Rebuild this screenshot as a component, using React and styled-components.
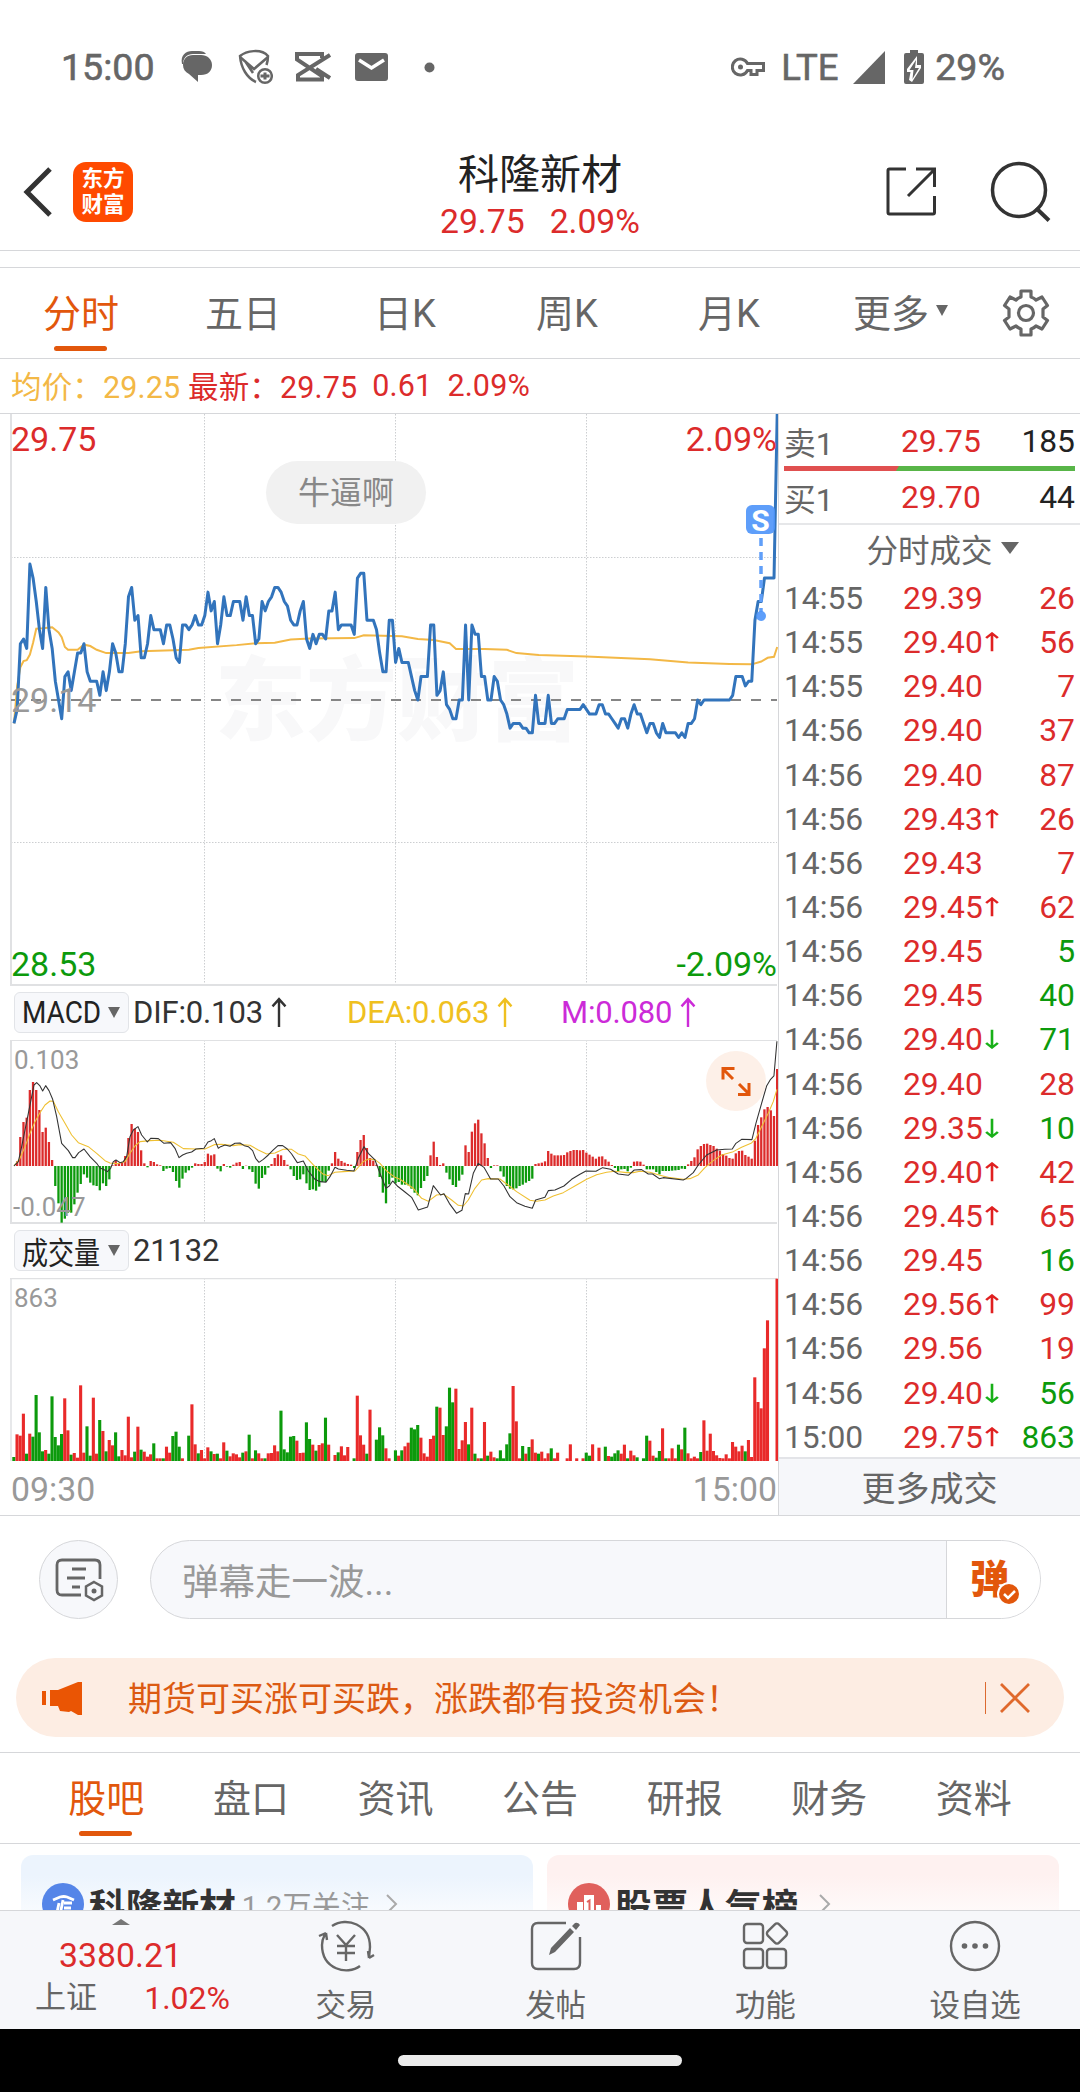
import styled, { createGlobalStyle } from "styled-components";

const GlobalStyle = createGlobalStyle`
  * {
    box-sizing: border-box;
  }
  body {
    margin: 0;
    background: #fff;
    font-family: Roboto, "Noto Sans CJK SC", sans-serif;
  }
`;

const RED = "#dc2b2b";
const GREEN = "#0c9a0c";
const ORANGE = "#e2570c";
const GRAY = "#666";
const LINE = "#d6d7da";

/* ---------- data ---------- */

// one value per minute, in cents above / below the previous close (29.14)
const PRICES = [
  -5, -2, 12, 13, 11, 29, 26, 21, 15, 11, 24, 15, 11, 4, 0, -4, 5, 6, 2, 6, 10,
  10, 12, 6, 4, 4, 4, 1, 6, 2, 6, 12, 10, 6, 6, 12, 22, 24, 17, 18, 9, 9, 12,
  18, 15, 15, 15, 12, 16, 16, 13, 9, 8, 16, 16, 15, 16, 18, 16, 16, 18, 23, 19,
  21, 12, 16, 22, 18, 18, 21, 21, 21, 17, 22, 18, 18, 12, 13, 21, 19, 21, 22,
  24, 24, 23, 21, 20, 17, 16, 16, 19, 21, 13, 11, 14, 12, 14, 14, 13, 19, 19,
  23, 15, 16, 16, 16, 16, 14, 26, 27, 27, 17, 17, 17, 15, 10, 6, 6, 17, 17, 8,
  11, 8, 8, 8, 5, 2, 0, 5, 5, 5, 16, 16, 1, 2, 6, -1, -2, -4, -4, 0, 0, 16, 0,
  16, 14, 14, 5, 5, 0, 0, 5, 4, 0, -1, -3, -6, -5, -5, -5, -6, -6, -7, -7, 1,
  -5, -5, -5, 1, -5, -5, -4, -4, -4, -2, -2, -2, -2, -2, -1, -2, -3, -3, -3,
  -1, -1, -3, -3, -4, -5, -6, -4, -4, -6, -3, -1, -3, -3, -5, -7, -5, -5, -7,
  -8, -5, -7, -7, -7, -7, -8, -7, -8, -5, -5, -4, 0, -1, 0, 0, 0, 0, 0, 0, 0,
  0, 0, 1, 5, 5, 5, 3, 4, 4, 17, 21, 21, 26, 26, 26, 26, 61,
];

// [minute, cents]
const AVERAGE = [
  [0, -5], [1, 3], [2, 7], [3, 8.3], [4, 8.5], [5, 9.7], [6, 12.2], [7, 15.2],
  [9, 15.3], [12, 15.5], [14, 14.4], [15, 13.4], [16, 11.3], [17, 10.7],
  [20, 10.7], [22, 11.8], [24, 11.5], [26, 10.7], [29, 10], [36, 10],
  [40, 10.4], [55, 10.7], [58, 11.1], [70, 11.7], [76, 12.1], [82, 12.2],
  [87, 12.9], [93, 13.1], [107, 13.2], [110, 13.8], [122, 13.6], [127, 13],
  [132, 12.8], [137, 12.1], [139, 10.9], [148, 10.9], [155, 10.7], [158, 10],
  [165, 9.6], [180, 9.3], [200, 8.7], [212, 8], [225, 7.7], [232, 7.6],
  [235, 8.2], [237, 9], [239, 9.2], [240, 11.3],
];

const HISTOGRAM = [
  0, 14, 87, 132, 145, 228, 252, 228, 168, 102, 115, 72, 18, -60, -112, -170,
  -158, -140, -140, -115, -80, -54, -25, -35, -50, -58, -60, -73, -52, -60,
  -40, 2, 17, 8, 10, 30, 84, 126, 112, 102, 47, 8, -4, 15, 12, 5, 2, -15, -8,
  -6, -18, -45, -65, -38, -20, -13, -5, 8, 6, 6, 12, 37, 32, 35, -8, -16, 6,
  -2, -5, 4, 10, 12, -9, 1, -10, -18, -53, -68, -36, -26, -5, 6, 24, 35, 32,
  18, 4, -10, -30, -42, -40, -25, -52, -72, -70, -74, -62, -48, -48, -14, 8,
  42, 22, 15, 10, 6, 4, -6, 42, 78, 93, 54, 24, 16, 4, -33, -80, -112, -55,
  -35, -52, -48, -56, -56, -58, -68, -80, -88, -66, -45, -30, 32, 73, 27, 3, 8,
  -20, -40, -57, -63, -44, -26, 62, 42, 103, 128, 139, 98, 68, 24, -6, 2, 2,
  -16, -32, -60, -68, -70, -67, -60, -56, -50, -45, -38, 6, 8, 10, 14, 45, 37,
  32, 32, 32, 33, 41, 45, 48, 48, 47, 48, 40, 34, 28, 22, 28, 29, 20, 13, 3,
  -6, -15, -10, -9, -16, -5, 13, 14, 13, 4, -10, -10, -10, -18, -25, -15, -15,
  -15, -14, -13, -12, -8, -9, 5, 15, 26, 50, 60, 66, 67, 63, 60, 52, 46, 36,
  31, 24, 22, 38, 45, 46, 33, 28, 22, 76, 123, 146, 170, 177, 167, 150, 291,
];

const DIF =
  "42,558 55,545 65,500 75,450 85,400 95,350 102,315 110,308 120,318 128,333 137,317 147,332 158,358 170,410 185,490 205,512 218,533 225,533 236,518 252,507 270,530 290,550 300,564 310,568 322,575 332,565 340,545 348,540 360,548 370,545 380,530 390,470 400,450 414,440 425,465 442,486 452,475 475,476 492,490 512,488 525,505 537,533 548,525 560,520 575,516 588,507 612,505 624,486 634,482 643,476 655,505 662,500 675,495 690,499 705,490 720,489 733,497 745,500 758,512 767,535 777,547 790,538 805,525 820,510 834,497 848,497 862,507 875,522 892,548 910,543 925,573 945,598 960,605 978,607 990,590 1005,562 1015,567 1040,571 1062,573 1075,535 1092,500 1105,520 1125,540 1140,580 1158,625 1168,618 1178,603 1192,618 1215,636 1235,652 1255,690 1283,681 1300,617 1322,645 1332,641 1348,670 1370,700 1386,691 1396,641 1406,642 1420,580 1435,550 1452,562 1472,597 1495,597 1512,618 1530,650 1550,668 1575,679 1597,685 1607,660 1635,652 1645,632 1665,630 1692,618 1715,598 1740,583 1758,573 1788,574 1808,563 1832,568 1855,582 1885,586 1903,570 1925,569 1945,582 1958,582 1978,596 1990,593 2050,600 2058,596 2080,578 2095,555 2120,525 2150,510 2175,508 2197,507 2208,490 2225,478 2256,479 2268,430 2285,370 2300,318 2312,298 2322,288 2331,184";

const DEA =
  "42,558 60,535 75,500 90,460 105,425 120,398 135,375 150,363 160,364 175,395 195,430 215,465 235,488 265,500 290,520 315,542 330,549 350,551 375,545 390,520 405,498 420,485 450,482 480,481 500,484 520,487 550,506 590,507 615,507 643,494 665,493 700,497 720,494 750,496 775,510 800,522 825,519 850,508 875,508 895,522 915,528 945,560 970,583 985,587 1005,577 1030,575 1065,573 1090,545 1105,537 1125,539 1140,550 1160,573 1185,592 1200,598 1240,625 1265,655 1285,664 1310,645 1332,643 1355,660 1375,676 1390,678 1405,660 1425,625 1445,600 1465,596 1500,597 1520,612 1550,635 1590,661 1610,664 1635,660 1660,648 1690,638 1730,615 1760,598 1790,584 1820,577 1845,574 1880,578 1900,578 1920,574 1950,577 1980,586 2010,593 2050,598 2070,596 2095,585 2115,563 2140,542 2165,525 2200,515 2225,502 2255,489 2268,475 2285,440 2305,400 2320,365 2331,328";

// positive: rising minute, negative: falling minute
const VOLUMES = [
  -12, 80, 76, 142, -22, 82, -73, -198, -86, -29, 33, -22, -194, -72, -47, -81,
  188, 92, -19, 24, 10, 227, 25, -104, -16, 190, 22, -123, 90, -29, 63, 47,
  -86, -14, 33, 17, 133, 11, -28, 103, -34, 28, 13, 20, -53, 8, 8, -8, 43, 25,
  -75, -88, -43, 8, 0, -76, 170, 50, -23, 33, 8, 41, -29, 21, -22, 8, 56, -31,
  14, 23, 20, 11, -25, 29, -79, 8, -32, 23, 8, -8, 23, 24, 47, 29, -151, -35,
  -26, -73, -75, 61, 24, 25, -116, -66, 49, -31, 48, 53, -130, 49, 0, 18, -26,
  44, 17, 42, 0, -8, 196, 77, 49, -22, 154, 0, -64, -101, -77, 38, 8, 0, -32,
  16, -32, 44, 55, -100, -95, -108, 70, 23, 13, 66, 76, -163, 160, 78, -104,
  -220, -176, 217, 36, 62, 117, -50, 160, -22, 8, -8, 117, -16, 28, 11, -8,
  -32, -8, -50, -83, 225, 119, 8, -45, 22, -42, 65, 25, -22, 28, 8, 23, -38, 8,
  25, 0, 0, 8, 50, 0, 8, 0, 8, -25, -16, 50, 0, 40, 0, -43, 15, -13, -23, -32,
  22, 49, -8, 31, 17, -11, 0, -8, -76, 61, 16, -10, -30, 98, -8, 8, 38, 8, -49,
  35, -100, 23, 8, 13, 8, -27, 122, 31, 82, 30, 17, 9, 8, 20, 8, 57, 43, 29,
  46, -29, 63, 12, 251, 177, 158, 338, 422, 0, 0, 547,
];

const TRADES = [
  { time: "14:55", price: "29.39", qty: 26 },
  { time: "14:55", price: "29.40", dir: "up", qty: 56 },
  { time: "14:55", price: "29.40", qty: 7 },
  { time: "14:56", price: "29.40", qty: 37 },
  { time: "14:56", price: "29.40", qty: 87 },
  { time: "14:56", price: "29.43", dir: "up", qty: 26 },
  { time: "14:56", price: "29.43", qty: 7 },
  { time: "14:56", price: "29.45", dir: "up", qty: 62 },
  { time: "14:56", price: "29.45", qty: 5, sell: true },
  { time: "14:56", price: "29.45", qty: 40, sell: true },
  { time: "14:56", price: "29.40", dir: "down", qty: 71, sell: true },
  { time: "14:56", price: "29.40", qty: 28 },
  { time: "14:56", price: "29.35", dir: "down", qty: 10, sell: true },
  { time: "14:56", price: "29.40", dir: "up", qty: 42 },
  { time: "14:56", price: "29.45", dir: "up", qty: 65 },
  { time: "14:56", price: "29.45", qty: 16, sell: true },
  { time: "14:56", price: "29.56", dir: "up", qty: 99 },
  { time: "14:56", price: "29.56", qty: 19 },
  { time: "14:56", price: "29.40", dir: "down", qty: 56, sell: true },
  { time: "15:00", price: "29.75", dir: "up", qty: 863, sell: true },
];

const xAt = (minute) => 4 + minute * 3.18;

/* ---------- page ---------- */

const Page = styled.div`
  width: 1080px;
  height: 2092px;
  display: flex;
  flex-direction: column;
  overflow: hidden;
  background: #fff;
  color: ${GRAY};
`;

const Content = styled.main`
  height: 1910px;
  flex: none;
  overflow: hidden;
`;

/* ---------- status bar ---------- */

const StatusBar = styled.div`
  display: flex;
  align-items: center;
  height: 134px;
  padding: 0 75px 0 61px;
  font-size: 37.6px;
  font-weight: 400;
  -webkit-text-stroke: 0.6px ${GRAY};
`;

const StatusIcons = styled.div`
  display: flex;
  align-items: center;
  margin-left: ${(p) => p.$left || 0}px;

  svg {
    display: block;
  }
`;

const StatusRight = styled.div`
  display: flex;
  align-items: center;
  margin-left: auto;
`;

const Lte = styled.span`
  margin: 0 12px 0 16px;
  width: 60px;
  font-size: 36.5px;
`;

const Percent = styled.span`
  margin-left: 11px;
`;

/* ---------- header ---------- */

const Header = styled.header`
  display: grid;
  grid-template-columns: 300px 1fr 300px;
  height: 117px;
  border-bottom: 1px solid ${LINE};
`;

const HeaderLeft = styled.div`
  display: flex;
  align-items: center;
  padding: 0 0 0 22px;
  gap: 20px;
`;

const AppLogo = styled.div`
  display: flex;
  flex-direction: column;
  justify-content: center;
  align-items: center;
  width: 60px;
  height: 60px;
  border-radius: 13px;
  background: #ff4a00;
  color: #fff;
  font-size: 21.5px;
  font-weight: 700;
  line-height: 26px;
`;

const HeaderTitle = styled.div`
  display: flex;
  flex-direction: column;
  align-items: center;
`;

const StockName = styled.h1`
  margin: 16px 0 0;
  font-size: 41px;
  font-weight: 400;
  line-height: 50px;
  color: #222;
`;

const StockQuote = styled.div`
  display: flex;
  gap: 25px;
  font-size: 33.7px;
  line-height: 44px;
  color: ${RED};
`;

const HeaderRight = styled.div`
  display: flex;
  align-items: center;
  justify-content: flex-end;
  padding: 0 29px 1px 0;
  gap: 53px;
`;

/* ---------- period tabs ---------- */

const PeriodTabs = styled.nav`
  display: flex;
  height: 92px;
  margin-top: 16px;
  border-top: 1px solid ${LINE};
  border-bottom: 1px solid ${LINE};
`;

const Tab = styled.div`
  position: relative;
  display: flex;
  justify-content: center;
  align-items: center;
  width: ${(p) => p.$width}px;
  padding-bottom: 6px;
  font-size: 38px;
  color: ${(p) => (p.$active ? ORANGE : GRAY)};

  &::after {
    content: "";
    display: ${(p) => (p.$active ? "block" : "none")};
    position: absolute;
    left: 50%;
    bottom: 7px;
    width: 53px;
    height: 5px;
    margin-left: -27px;
    border-radius: 3px;
    background: ${ORANGE};
  }
`;

const Triangle = styled.i`
  width: 0;
  height: 0;
  margin-left: ${(p) => p.$gap || 0}px;
  border-left: ${(p) => p.$w / 2}px solid transparent;
  border-right: ${(p) => p.$w / 2}px solid transparent;
  border-top: ${(p) => p.$h}px solid ${GRAY};
`;

const SettingsSlot = styled.div`
  display: flex;
  align-items: center;
  margin-left: auto;
  padding-right: 30px;
`;

const Summary = styled.div`
  display: flex;
  align-items: center;
  height: 55px;
  padding: 0 0 2px 11px;
  border-bottom: 1px solid ${LINE};
  font-size: 30.5px;
  letter-spacing: 0.15px;
  color: ${RED};
  white-space: pre;
`;

const AveragePrice = styled.span`
  width: 177px;
  color: #f3b846;
`;

const SummaryItem = styled.span`
  margin-right: 15px;
`;

/* ---------- charts ---------- */

const Board = styled.section`
  display: flex;
  height: 1102px;
  border-bottom: 1px solid ${LINE};
`;

const Charts = styled.div`
  width: 779px;
  padding-left: 10px;
  border-right: 1px solid ${LINE};

  svg {
    display: block;
  }
`;

const IndicatorBar = styled.div`
  display: flex;
  align-items: center;
  height: 54px;
  padding: 0 0 1px 4px;
  font-size: 31px;
  color: #333;
`;

const IndicatorPicker = styled.button`
  display: flex;
  align-items: center;
  justify-content: space-between;
  flex: none;
  width: 115px;
  height: 41px;
  padding: 0 8px 1px 7px;
  border: 1px solid #e2e4e8;
  border-radius: 6px;
  background: #f7f8fb;
  color: #222;
  font: inherit;
`;

const PickerLabel = styled.span`
  width: 77px;
  white-space: nowrap;
  text-align: left;
  transform: scaleX(${(p) => p.$squeeze});
  transform-origin: left;
`;

const Reading = styled.span`
  display: flex;
  align-items: center;
  gap: 6px;
  width: ${(p) => p.$width}px;
  padding-left: 4px;
  color: ${(p) => p.$color};
  letter-spacing: -0.15px;
`;

const TimeAxis = styled.div`
  display: flex;
  justify-content: space-between;
  align-items: center;
  height: 54px;
  padding: 3px 1px 0 1px;
  font-size: 33.8px;
  color: #999;
`;

/* ---------- order book ---------- */

const Book = styled.div`
  flex: 1;
  display: flex;
  flex-direction: column;
`;

const Quote = styled.div`
  display: grid;
  grid-template-columns: 117px 1fr auto;
  align-items: center;
  height: ${(p) => p.$height}px;
  padding: ${(p) => p.$drop || 0}px 5px 0 5px;
  font-size: 31.8px;
`;

const Price = styled.span`
  display: flex;
  align-items: center;
  color: ${RED};
`;

const BookQty = styled.span`
  color: #222;
`;

const Ratio = styled.div`
  height: 5px;
  margin: 0 5px;
  background: linear-gradient(120deg, #e05050 0 99px, #58b548 100px);
`;

const BookTitle = styled.div`
  display: flex;
  justify-content: center;
  align-items: center;
  height: 51px;
  padding: 0 0 3px 26px;
  border-top: 2px solid #e6e7e9;
  font-size: 31.5px;
`;

const TradeRow = styled.div`
  display: grid;
  grid-template-columns: 119px 1fr auto;
  align-items: center;
  height: 44.15px;
  padding: 4px 5px 0;
  font-size: 31.8px;
`;

const TradeQty = styled.span`
  color: ${(p) => (p.$sell ? GREEN : RED)};
`;

const MoreTrades = styled.div`
  display: flex;
  justify-content: center;
  align-items: center;
  flex: 1;
  padding-bottom: 1px;
  border-top: 2px solid #e3e4e8;
  background: #f6f7fa;
  font-size: 34px;
`;

/* ---------- bullet comments ---------- */

const CommentRow = styled.div`
  display: flex;
  gap: 32px;
  padding: 24px 39px 0 39px;
`;

const RoundButton = styled.button`
  display: flex;
  align-items: center;
  justify-content: center;
  width: 79px;
  height: 79px;
  padding: 0;
  border: 1px solid ${LINE};
  border-radius: 50%;
  background: #f7f8fb;
`;

const CommentBox = styled.div`
  flex: 1;
  display: flex;
  height: 79px;
  border: 1px solid ${LINE};
  border-radius: 40px;
  background: #f7f8fb;
  overflow: hidden;
`;

const Placeholder = styled.div`
  display: flex;
  align-items: center;
  flex: 1;
  padding: 0 0 1px 31px;
  font-size: 36.5px;
  color: #999;
`;

const BulletToggle = styled.div`
  position: relative;
  display: flex;
  align-items: center;
  width: 94px;
  padding: 0 0 8px 23px;
  border-left: 1px solid ${LINE};
  background: #fff;
  font-size: 39px;
  font-weight: 900;
  color: ${ORANGE};

  svg {
    position: absolute;
    left: 49px;
    top: 40px;
  }
`;

const Banner = styled.div`
  display: flex;
  align-items: center;
  height: 79px;
  margin: 39px 16px 15px;
  padding: 0 34px 0 26px;
  border-radius: 40px;
  background: #fdede3;
  color: #dc5a12;
  font-size: 34px;
`;

const BannerText = styled.span`
  flex: 1;
  margin: 0 0 3px 46px;
`;

const BannerDivider = styled.i`
  width: 1px;
  height: 32px;
  margin-right: 14px;
  background: #dc6a30;
`;

/* ---------- community ---------- */

const SectionTabs = styled.nav`
  display: flex;
  height: 92px;
  padding-left: 34px;
  border-top: 1px solid ${LINE};
  border-bottom: 1px solid ${LINE};
`;

const Cards = styled.div`
  display: flex;
  gap: 14px;
  padding: 11px 21px 0;
`;

const Card = styled.div`
  display: flex;
  align-items: center;
  flex: 1;
  height: 104px;
  padding: 0 0 7px 21px;
  border-radius: 12px;
  background: linear-gradient(${(p) => p.$tint} 20%, #fff 75%);
`;

const CardTitle = styled.strong`
  margin: 0 6px 0 5px;
  font-size: 36.7px;
  font-weight: 700;
  color: #333;
`;

const Followers = styled.span`
  margin: 0 16px 0 0;
  font-size: 29px;
  letter-spacing: 0.2px;
  color: #999;
`;

/* ---------- bottom bar ---------- */

const BottomBar = styled.nav`
  display: flex;
  flex: none;
  height: 119px;
  border-top: 1px solid ${LINE};
  background: #f6f7fa;
`;

const IndexBlock = styled.div`
  display: flex;
  flex-direction: column;
  align-items: center;
  width: 241px;
  padding-top: 8px;
`;

const UpMark = styled.i`
  width: 0;
  height: 0;
  border-left: 9.5px solid transparent;
  border-right: 9.5px solid transparent;
  border-bottom: 6px solid #777;
`;

const IndexValue = styled.div`
  margin-top: 10px;
  font-size: 33.8px;
  line-height: 42px;
  color: ${RED};
`;

const IndexDetail = styled.div`
  display: flex;
  align-items: center;
  justify-content: space-between;
  width: 195px;
  margin-right: -24px;
  line-height: 42px;
  font-size: 31px;
`;

const IndexChange = styled.span`
  font-size: 32px;
  color: ${RED};
`;

const NavItem = styled.div`
  display: flex;
  flex-direction: column;
  align-items: center;
  flex: 1;
  padding-top: 8px;
  font-size: 30.5px;
  line-height: 44px;

  svg {
    display: block;
    margin-bottom: 11px;
  }
`;

const GestureBar = styled.div`
  display: flex;
  justify-content: center;
  align-items: flex-start;
  flex: 1;
  padding-top: 26px;
  background: #000;
`;

const Handle = styled.div`
  width: 284px;
  height: 11px;
  border-radius: 6px;
  background: #ebebeb;
`;

/* ---------- small drawings ---------- */

function ArrowIcon({ down, color, size = 20, height = 31, weight = 2.4 }) {
  return (
    <svg
      width={size}
      height={height}
      viewBox="0 0 20 30"
      fill="none"
      stroke={color}
      strokeWidth={weight}
      preserveAspectRatio="none"
    >
      <path
        d={down ? "M10 1v27M3.5 21l6.5 7 6.5-7" : "M10 29V2M3.5 9L10 2l6.5 7"}
      />
    </svg>
  );
}

function ChevronRight() {
  return (
    <svg width="12" height="20" fill="none" stroke="#aaa" strokeWidth="2">
      <path d="M1 1l9 9-9 9" />
    </svg>
  );
}

function GridLines({ height, rows = [] }) {
  return (
    <g stroke="#ccced1" strokeWidth="1" strokeDasharray="1.5 1.5">
      {[194.5, 385.5, 576.5].map((x) => (
        <path key={x} d={`M${x} 0V${height}`} />
      ))}
      {rows.map((y) => (
        <path key={y} d={`M1 ${y}H767`} />
      ))}
    </g>
  );
}

function ChartFrame({ height, top = true }) {
  return (
    <g stroke="#e0e1e3" fill="none">
      <path d={`M1 0V${height - 1}H767`} strokeWidth="2" />
      {top && <path d="M0 .5H767" />}
    </g>
  );
}

function PriceChart() {
  const yAt = (cents) => 286 - cents * 4.69;
  return (
    <svg width="768" height="572">
      <text
        x="205"
        y="319"
        fontSize="91"
        fontWeight="900"
        fill="#f8f8f9"
        fontFamily="Noto Sans CJK SC, sans-serif"
      >
        东方财富
      </text>
      <GridLines height={572} rows={[143.5, 428.5]} />
      <ChartFrame height={572} top={false} />
      <path
        d="M1 286H767"
        stroke="#858585"
        strokeWidth="2"
        strokeDasharray="10 10"
      />
      <polyline
        points={AVERAGE.map(([m, c]) => `${xAt(m)},${yAt(c)}`).join(" ")}
        fill="none"
        stroke="#f3b846"
        strokeWidth="2"
      />
      <polyline
        points={PRICES.map((c, m) => `${xAt(m)},${yAt(c)}`).join(" ")}
        fill="none"
        stroke="#3274bc"
        strokeWidth="3"
        strokeLinejoin="round"
      />
      <g fill="#4c93fa" fillOpacity=".9">
        <rect x="736" y="91" width="29" height="29" rx="6" />
        <path
          d="M751 124v74"
          stroke="#609ff9"
          strokeWidth="3.5"
          strokeDasharray="8 6"
        />
        <circle cx="751" cy="202" r="5" />
        <text
          x="750.5"
          y="116.5"
          fontSize="30"
          fontWeight="700"
          fill="#fff"
          fillOpacity="1"
          textAnchor="middle"
        >
          S
        </text>
      </g>
      <rect x="256" y="47" width="160" height="63" rx="31.5" fill="#f1f1f1" />
      <text x="288" y="90" fontSize="32" fill="#888">
        牛逼啊
      </text>
      <g fontSize="34">
        <text x="1" y="37" fill={RED}>
          29.75
        </text>
        <text x="1" y="298" fill="#999">
          29.14
        </text>
        <text x="1" y="562" fill={GREEN}>
          28.53
        </text>
        <g textAnchor="end">
          <text x="767" y="37" fill={RED}>
            2.09%
          </text>
          <text x="767" y="562" fill={GREEN}>
            -2.09%
          </text>
        </g>
      </g>
    </svg>
  );
}

function MacdChart() {
  return (
    <svg width="768" height="184">
      <GridLines height={183} />
      <ChartFrame height={184} />
      {HISTOGRAM.map((v, m) => (
        <rect
          key={m}
          x={xAt(m) - 1.2}
          y={v > 0 ? 126 - v / 3 : 126}
          width="2.3"
          height={Math.abs(v) / 3}
          fill={v > 0 ? RED : GREEN}
        />
      ))}
      <g
        transform="translate(-10 -60) scale(.3333)"
        fill="none"
        strokeWidth="3.2"
        strokeLinejoin="round"
      >
        <polyline points={DEA} stroke="#efc032" />
        <polyline points={DIF} stroke="#333" />
      </g>
      <g fontSize="26" fill="#999">
        <text x="4" y="29">
          0.103
        </text>
        <text x="3" y="176">
          -0.047
        </text>
      </g>
      <circle cx="726" cy="41" r="30" fill="#fdeee5" fillOpacity=".9" />
      <path
        d="M723 39L713 29M713 39.500V28.500H724.500M729 44l10 10M739 43V54.500H728"
        fill="none"
        stroke={ORANGE}
        strokeWidth="3"
      />
    </svg>
  );
}

function VolumeChart() {
  return (
    <svg width="768" height="183">
      <GridLines height={183} />
      <path d="M1 0V183M0 .5H767" stroke="#e0e1e3" strokeWidth="1.500" />
      {VOLUMES.map((v, m) => (
        <rect
          key={m}
          x={xAt(m) - 1.7}
          y={183 - Math.abs(v) / 3}
          width="3.1"
          height={Math.abs(v) / 3}
          fill={v > 0 ? "#e92a2a" : GREEN}
        />
      ))}
      <text x="4" y="29" fontSize="26" fill="#999">
        863
      </text>
    </svg>
  );
}

/* ---------- sections ---------- */

function StatusSection() {
  return (
    <StatusBar>
      15:00
      <StatusIcons $left={25}>
        <svg width="33" height="34" viewBox="0 0 33 34">
          <path
            d="M2 14C0 5 6 1 12 1h7c3 0 6 1 7 3H13C7 4 3 8 3 14z"
            fill={GRAY}
          />
          <path
            d="M13 5h8c6 0 11 4 11 10s-4 10-11 10h-3v7L9 24c-4-2-6-5-6-9 0-6 4-10 10-10z"
            fill={GRAY}
          />
        </svg>
      </StatusIcons>
      <StatusIcons $left={25}>
        <svg
          width="35"
          height="36"
          viewBox="0 0 35 36"
          fill="none"
          stroke={GRAY}
          strokeWidth="2.500"
        >
          <path d="M18 33C9 29 3 19 2 7c6-5 21-8 28 0 0 3-.5 6-1.500 9" />
          <path d="M2 8l14 12L30 8M7 12l8 12" />
          <circle cx="27" cy="27" r="6.800" />
          <path d="M22.500 27h9M27 23.500v7" strokeWidth="3" />
        </svg>
      </StatusIcons>
      <StatusIcons $left={21}>
        <svg
          width="37"
          height="32"
          viewBox="0 0 37 32"
          fill="none"
          stroke={GRAY}
          strokeWidth="4"
        >
          <path d="M36 4L4 24v4.500h24V25L3 8.500V3h25v4M22 18l14 9" />
        </svg>
      </StatusIcons>
      <StatusIcons $left={24}>
        <svg width="33" height="28" viewBox="0 0 33 28">
          <rect width="33" height="28" rx="3" fill={GRAY} />
          <path
            d="M4 7l12.500 8L29 7"
            fill="none"
            stroke="#fff"
            strokeWidth="3.500"
          />
        </svg>
      </StatusIcons>
      <StatusIcons $left={36}>
        <svg width="11" height="11">
          <circle cx="5.500" cy="5.500" r="5" fill={GRAY} />
        </svg>
      </StatusIcons>
      <StatusRight>
        <svg
          width="34"
          height="22"
          viewBox="0 0 34 22"
          fill="none"
          stroke={GRAY}
          strokeWidth="3"
        >
          <path d="M16.500 7.500a8 8 0 1 0 0 7H20v4h6v-4h6.500v-7z" />
          <circle cx="9.500" cy="11" r="2.500" fill={GRAY} stroke="none" />
        </svg>
        <Lte>LTE</Lte>
        <svg width="32" height="33">
          <path d="M32 0v33H0z" fill={GRAY} />
        </svg>
        <StatusIcons $left={19}>
          <svg width="20" height="34" viewBox="0 0 20 34">
            <path
              d="M6 0h8v3h4a2 2 0 0 1 2 2v27a2 2 0 0 1-2 2H2a2 2 0 0 1-2-2V5a2 2 0 0 1 2-2h4z"
              fill={GRAY}
            />
            <path d="M13 6L3 19v3h3.500L5 30l3 2 9-14v-3h-4z" fill="#fff" />
            <path d="M12 10L5.500 20h4L8.500 29 15 18h-4z" fill={GRAY} />
          </svg>
        </StatusIcons>
        <Percent>29%</Percent>
      </StatusRight>
    </StatusBar>
  );
}

function HeaderSection() {
  return (
    <Header>
      <HeaderLeft>
        <svg width="31" height="50" fill="none" stroke="#333" strokeWidth="5">
          <path d="M28 2L5 25l23 23" />
        </svg>
        <AppLogo>
          <span>东方</span>
          <span>财富</span>
        </AppLogo>
      </HeaderLeft>
      <HeaderTitle>
        <StockName>科隆新材</StockName>
        <StockQuote>
          <span>29.75</span>
          <span>2.09%</span>
        </StockQuote>
      </HeaderTitle>
      <HeaderRight>
        <svg
          width="52"
          height="52"
          viewBox="0 0 52 52"
          fill="none"
          stroke="#333"
          strokeWidth="3"
        >
          <path d="M21 3H4.500Q3 3 3 4.500v42Q3 48 4.500 48H48q1.500 0 1.500-1.500V30" />
          <path d="M31 3h18.500v18M49 4L23 30" />
        </svg>
        <svg
          width="61"
          height="61"
          viewBox="0 0 61 61"
          fill="none"
          stroke="#333"
          strokeWidth="3.500"
        >
          <circle cx="29" cy="29" r="26.500" />
          <path d="M46 47l13 12.500" strokeWidth="4" />
        </svg>
      </HeaderRight>
    </Header>
  );
}

function GearIcon() {
  return (
    <svg
      width="48"
      height="48"
      viewBox="0 0 48 48"
      fill="none"
      stroke={GRAY}
      strokeWidth="3.200"
      strokeLinejoin="round"
    >
      <path d="M19 2h10v6q3 1 5 3l6-3 5.500 8.500-4.500 3.500v8l4.500 3.500L40 40l-6-3q-2 2-5 3v6H19v-6q-3-1-5-3l-6 3-5.500-8.500L7 28v-8l-4.500-3.500L8 8l6 3q2-2 5-3z" />
      <circle cx="24" cy="24" r="7.500" />
    </svg>
  );
}

function TradePanel() {
  return (
    <Book>
      <Quote $height={52} $drop={2}>
        <span>卖1</span>
        <Price>29.75</Price>
        <BookQty>185</BookQty>
      </Quote>
      <Ratio />
      <Quote $height={52}>
        <span>买1</span>
        <Price>29.70</Price>
        <BookQty>44</BookQty>
      </Quote>
      <BookTitle>
        分时成交
        <Triangle $w={18} $h={12} $gap={8} />
      </BookTitle>
      {TRADES.map((t, i) => (
        <TradeRow key={i}>
          <span>{t.time}</span>
          <Price>
            {t.price}
            {t.dir && (
              <ArrowIcon
                down={t.dir === "down"}
                color={t.dir === "down" ? "#18b018" : "#e02020"}
                size={18}
                height={20}
                weight={2.9}
              />
            )}
          </Price>
          <TradeQty $sell={t.sell}>{t.qty}</TradeQty>
        </TradeRow>
      ))}
      <MoreTrades>更多成交</MoreTrades>
    </Book>
  );
}

function ChartPanel() {
  return (
    <Charts>
      <PriceChart />
      <IndicatorBar>
        <IndicatorPicker>
          <PickerLabel $squeeze={0.9}>MACD</PickerLabel>
          <Triangle $w={13} $h={11} />
        </IndicatorPicker>
        <Reading $width={214} $color="#333">
          DIF:0.103
          <ArrowIcon color="#333" />
        </Reading>
        <Reading $width={214} $color="#efc020">
          DEA:0.063
          <ArrowIcon color="#efc020" />
        </Reading>
        <Reading $width={180} $color="#cc2bd8">
          M:0.080
          <ArrowIcon color="#cc2bd8" />
        </Reading>
      </IndicatorBar>
      <MacdChart />
      <IndicatorBar>
        <IndicatorPicker>
          <PickerLabel $squeeze={0.84}>成交量</PickerLabel>
          <Triangle $w={13} $h={11} />
        </IndicatorPicker>
        <Reading $width={200} $color="#333">
          21132
        </Reading>
      </IndicatorBar>
      <VolumeChart />
      <TimeAxis>
        <span>09:30</span>
        <span>15:00</span>
      </TimeAxis>
    </Charts>
  );
}

function CommentSection() {
  return (
    <>
      <CommentRow>
        <RoundButton>
          <svg
            width="50"
            height="46"
            viewBox="0 0 50 46"
            fill="none"
            stroke={GRAY}
            strokeWidth="2.800"
          >
            <path d="M27 38H8q-5 0-5-5V8q0-5 5-5h33q5 0 5 5v14M18 12h14M13 21h18M18 30h8" />
            <path d="M40 25l8 4.500v9L40 43l-8-4.500v-9z" strokeWidth="2.500" />
            <circle cx="40" cy="34" r="2.500" fill={GRAY} stroke="none" />
          </svg>
        </RoundButton>
        <CommentBox>
          <Placeholder>弹幕走一波...</Placeholder>
          <BulletToggle>
            弹
            <svg width="26" height="26" viewBox="0 0 26 26">
              <circle cx="13" cy="13" r="12" fill="#fff" />
              <circle cx="13" cy="13" r="10" fill={ORANGE} />
              <path
                d="M8 13l4 4 7-7"
                fill="none"
                stroke="#fff"
                strokeWidth="2.500"
              />
            </svg>
          </BulletToggle>
        </CommentBox>
      </CommentRow>
      <Banner>
        <svg width="40" height="34" viewBox="0 0 40 34" fill="#ea5504">
          <path d="M0 10h4v14H0zM8 9h8L36 1h4v33h-4l-7-4-2 1-9-1-2-5H8z" />
        </svg>
        <BannerText>期货可买涨可买跌，涨跌都有投资机会！</BannerText>
        <BannerDivider />
        <svg width="30" height="30" fill="none" stroke="#e0692c" strokeWidth="2.800">
          <path d="M1 1l28 28M29 1L1 29" />
        </svg>
      </Banner>
    </>
  );
}

function CommunitySection() {
  const tabs = ["股吧", "盘口", "资讯", "公告", "研报", "财务", "资料"];
  return (
    <>
      <SectionTabs>
        {tabs.map((name, i) => (
          <Tab key={name} $width={144.6} $active={i === 0}>
            {name}
          </Tab>
        ))}
      </SectionTabs>
      <Cards>
        <Card $tint="#ecf4fd">
          <svg width="42" height="42" viewBox="0 0 42 42">
            <circle cx="21" cy="21" r="21" fill="#5585e8" />
            <path
              d="M11 17l7-3q4-1 7 0l7 3M17 20l-3 14M21 17l-3 15M22 25h7M22 20h8"
              fill="none"
              stroke="#fff"
              strokeWidth="2.800"
            />
          </svg>
          <CardTitle>科隆新材</CardTitle>
          <Followers>1.2万关注</Followers>
          <ChevronRight />
        </Card>
        <Card $tint="#fef1f0">
          <svg width="42" height="42" viewBox="0 0 42 42">
            <circle cx="21" cy="21" r="21" fill="#e0605c" />
            <path d="M9 19h6v16H9zM16 12h10v23H16zM28 22h5v13h-5z" fill="#fff" />
            <path d="M19 19l2.500-1.500V27" fill="none" stroke="#e0605c" strokeWidth="2" />
          </svg>
          <CardTitle>股票人气榜</CardTitle>
          <StatusIcons $left={15}>
            <ChevronRight />
          </StatusIcons>
        </Card>
      </Cards>
    </>
  );
}

function BottomSection() {
  const stroke = { fill: "none", stroke: GRAY, strokeWidth: 2.4 };
  return (
    <BottomBar>
      <IndexBlock>
        <UpMark />
        <IndexValue>3380.21</IndexValue>
        <IndexDetail>
          <span>上证</span>
          <IndexChange>1.02%</IndexChange>
        </IndexDetail>
      </IndexBlock>
      <NavItem>
        <svg width="58" height="54" viewBox="0 0 58 54" {...stroke}>
          <path d="M15 7C30-3 53 6 53 28l-1 11M52 39l5-3M52 39l-1-7" />
          <path d="M43 47C30 57 5 50 5 26q0-5 3-11M9 14l-7 3M9 14l1 7" />
          <path d="M20 16l9 10 9-10M20 27h18M20 34h18M29 26v16" />
        </svg>
        交易
      </NavItem>
      <NavItem>
        <svg width="54" height="54" viewBox="0 0 54 54" {...stroke}>
          <path d="M37 4H9Q3 4 3 10v34q0 6 6 6h36q6 0 6-6V18" />
          <path
            d="M46 4q3-1 5 2l-4 5-4-4zM41 9l4 4-19 20-6 3 2-7z"
            fill={GRAY}
            stroke="none"
          />
        </svg>
        发帖
      </NavItem>
      <NavItem>
        <svg width="48" height="54" viewBox="0 0 48 54" {...stroke}>
          <rect x="3" y="5" width="19" height="19" rx="3" />
          <rect x="3" y="30" width="19" height="19" rx="3" />
          <rect x="26" y="30" width="19" height="19" rx="3" />
          <rect
            x="28"
            y="6.500"
            width="16"
            height="16"
            rx="3"
            transform="rotate(45 36 14.500)"
          />
        </svg>
        功能
      </NavItem>
      <NavItem>
        <svg width="52" height="54" viewBox="0 0 52 54" {...stroke}>
          <circle cx="26" cy="27" r="24" />
          <g fill={GRAY} stroke="none">
            <circle cx="15.500" cy="27" r="2.800" />
            <circle cx="26" cy="27" r="2.800" />
            <circle cx="36.500" cy="27" r="2.800" />
          </g>
        </svg>
        设自选
      </NavItem>
    </BottomBar>
  );
}

export default function App() {
  return (
    <Page>
      <GlobalStyle />
      <Content>
        <StatusSection />
        <HeaderSection />
        <PeriodTabs>
          {["分时", "五日", "日K", "周K", "月K"].map((name, i) => (
            <Tab key={name} $width={162} $active={i === 0}>
              {name}
            </Tab>
          ))}
          <Tab $width={181}>
            更多
            <Triangle $w={13} $h={11} $gap={7} />
          </Tab>
          <SettingsSlot>
            <GearIcon />
          </SettingsSlot>
        </PeriodTabs>
        <Summary>
          <AveragePrice>均价：29.25</AveragePrice>
          <SummaryItem>最新：29.75</SummaryItem>
          <SummaryItem>0.61</SummaryItem>
          <SummaryItem>2.09%</SummaryItem>
        </Summary>
        <Board>
          <ChartPanel />
          <TradePanel />
        </Board>
        <CommentSection />
        <CommunitySection />
      </Content>
      <BottomSection />
      <GestureBar>
        <Handle />
      </GestureBar>
    </Page>
  );
}
